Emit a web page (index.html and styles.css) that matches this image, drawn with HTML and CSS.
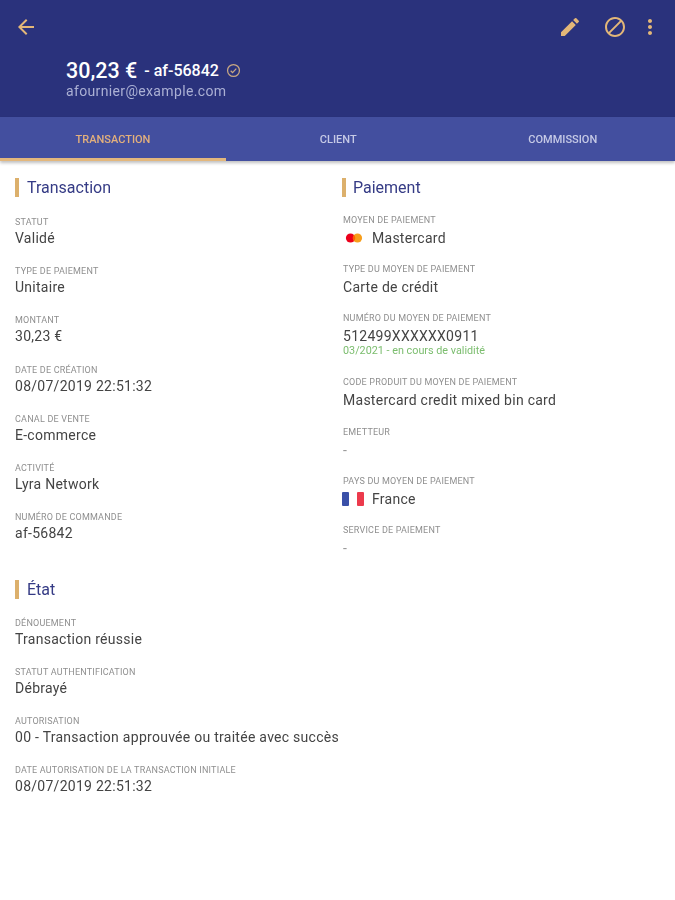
FILE: index.html
```html
<!DOCTYPE html>
<html lang="fr">
<head>
    <meta charset="UTF-8">
    <meta name="viewport" content="width=device-width, initial-scale=1.0">
    <title>Transaction</title>
    <link rel="stylesheet" href="styles.css">
</head>
<body>
    <header class="top-bar">
        <div class="actions">
            <svg class="icon back" viewBox="0 0 24 24"><path d="M20 11H7.83l5.59-5.59L12 4l-8 8 8 8 1.41-1.41L7.83 13H20v-2z"/></svg>
            <div class="actions-right">
                <svg class="icon" viewBox="0 0 24 24"><path d="M3 17.25V21h3.75L17.81 9.94l-3.75-3.75L3 17.25zM20.71 7.04a1 1 0 0 0 0-1.41l-2.34-2.34a1 1 0 0 0-1.41 0l-1.83 1.83 3.75 3.75 1.83-1.83z"/></svg>
                <svg class="icon" viewBox="0 0 24 24"><path d="M12 2C6.48 2 2 6.48 2 12s4.48 10 10 10 10-4.48 10-10S17.52 2 12 2zM4 12c0-4.42 3.58-8 8-8 1.85 0 3.55.63 4.9 1.69L5.69 16.9A7.9 7.9 0 0 1 4 12zm8 8c-1.85 0-3.55-.63-4.9-1.69L18.31 7.1A7.9 7.9 0 0 1 20 12c0 4.42-3.58 8-8 8z"/></svg>
                <svg class="icon dots" viewBox="0 0 24 24"><path d="M12 8c1.1 0 2-.9 2-2s-.9-2-2-2-2 .9-2 2 .9 2 2 2zm0 2c-1.1 0-2 .9-2 2s.9 2 2 2 2-.9 2-2-.9-2-2-2zm0 6c-1.1 0-2 .9-2 2s.9 2 2 2 2-.9 2-2-.9-2-2-2z"/></svg>
            </div>
        </div>
        <div class="summary">
            <div class="summary-line">
                <span class="amount">30,23 €</span>
                <span class="order">- af-56842</span>
                <svg class="check" viewBox="0 0 24 24"><circle cx="12" cy="12" r="9.5"/><path d="M7.5 12.5l3 3 6-6.5"/></svg>
            </div>
            <div class="email">afournier@example.com</div>
        </div>
    </header>

    <nav class="tabs">
        <div class="tab active">TRANSACTION</div>
        <div class="tab">CLIENT</div>
        <div class="tab">COMMISSION</div>
    </nav>

    <main class="content">
        <div class="left-col">
            <section class="section">
                <h2 class="section-title">Transaction</h2>
                <div class="field"><div class="label">Statut</div><div class="value">Validé</div></div>
                <div class="field"><div class="label">Type de paiement</div><div class="value">Unitaire</div></div>
                <div class="field"><div class="label">Montant</div><div class="value">30,23 €</div></div>
                <div class="field"><div class="label">Date de création</div><div class="value">08/07/2019 22:51:32</div></div>
                <div class="field"><div class="label">Canal de vente</div><div class="value">E-commerce</div></div>
                <div class="field"><div class="label">Activité</div><div class="value">Lyra Network</div></div>
                <div class="field"><div class="label">Numéro de commande</div><div class="value">af-56842</div></div>
            </section>
            <section class="section state">
                <h2 class="section-title">État</h2>
                <div class="field"><div class="label">Dénouement</div><div class="value">Transaction réussie</div></div>
                <div class="field"><div class="label">Statut authentification</div><div class="value">Débrayé</div></div>
                <div class="field"><div class="label">Autorisation</div><div class="value">00 - Transaction approuvée ou traitée avec succès</div></div>
                <div class="field"><div class="label">Date autorisation de la transaction initiale</div><div class="value">08/07/2019 22:51:32</div></div>
            </section>
        </div>
        <div class="right-col">
            <section class="section payment">
                <h2 class="section-title">Paiement</h2>
                <div class="field"><div class="label">Moyen de paiement</div>
                    <div class="value with-icon">
                        <svg class="brand" viewBox="0 0 22 14"><circle cx="7.5" cy="7" r="4.6" fill="#eb001b"/><circle cx="14.5" cy="7" r="4.6" fill="#f79e1b"/><path d="M11 4a4.6 4.6 0 0 1 0 6 4.6 4.6 0 0 1 0-6z" fill="#ff5f00"/></svg>
                        Mastercard
                    </div>
                </div>
                <div class="field"><div class="label">Type du moyen de paiement</div><div class="value">Carte de crédit</div></div>
                <div class="field"><div class="label">Numéro du moyen de paiement</div><div class="value">512499XXXXXX0911</div><div class="validity">03/2021 - en cours de validité</div></div>
                <div class="field"><div class="label">Code produit du moyen de paiement</div><div class="value">Mastercard credit mixed bin card</div></div>
                <div class="field"><div class="label">Emetteur</div><div class="value dash">-</div></div>
                <div class="field"><div class="label">Pays du moyen de paiement</div>
                    <div class="value with-icon">
                        <svg class="brand flag" viewBox="0 0 22 14"><rect width="7" height="14" rx="1" fill="#3a50a8"/><rect x="15" width="7" height="14" rx="1" fill="#ec3a4c"/></svg>
                        France
                    </div>
                </div>
                <div class="field"><div class="label">Service de paiement</div><div class="value dash">-</div></div>
            </section>
        </div>
    </main>
</body>
</html>
```

FILE: styles.css
```css
body {
    margin: 0;
    background: #fff;
    font-family: Roboto, "Liberation Sans", sans-serif;
    color: #444;
    filter: blur(0.6px);
}
.top-bar {
    height: 117px;
    box-sizing: border-box;
    padding: 14.5px 13px 0 14px;
    background: #2a327c;
}
.actions {
    display: flex;
    justify-content: space-between;
    align-items: center;
}
.actions-right {
    display: flex;
    gap: 21px;
}
.icon {
    width: 24px;
    height: 24px;
    fill: #e3b778;
}
.dots {
    margin-left: -10px;
}
.summary {
    padding: 19.5px 0 0 52px;
}
.summary-line {
    display: flex;
    align-items: center;
    color: #fff;
    height: 24px;
}
.amount {
    font-size: 21.5px;
    font-weight: 500;
}
.order {
    font-size: 16px;
    font-weight: 500;
    margin-left: 7px;
}
.check {
    width: 15px;
    height: 15px;
    margin-left: 7px;
    fill: none;
    stroke: #c9a883;
    stroke-width: 2;
}
.email {
    font-size: 14px;
    line-height: 18px;
    color: #abb0d4;
    letter-spacing: 0.35px;
}
.tabs {
    display: grid;
    grid-template-columns: 226px 1fr 1fr;
    height: 44px;
    background: #434f9f;
    box-shadow: 0 2px 3px rgba(0, 0, 0, 0.25);
}
.tab {
    display: flex;
    align-items: center;
    justify-content: center;
    box-sizing: border-box;
    font-size: 11px;
    font-weight: 500;
    color: #c6cae6;
}
.tab.active {
    color: #e3b07c;
    border-bottom: 3px solid #e3b77c;
    padding-top: 3px;
}
.content {
    display: grid;
    grid-template-columns: 328px 1fr;
    padding: 17px 0 0 15px;
}
.section-title {
    margin: 0 0 19px;
    padding-left: 8px;
    height: 19px;
    line-height: 19px;
    border-left: 4px solid #dcb06c;
    font-size: 16px;
    font-weight: 400;
    color: #353b85;
}
.payment .section-title {
    margin: 0 0 17px -1px;
    padding-left: 7px;
}
.state {
    margin-top: 20px;
}
.state .section-title {
    margin-bottom: 18px;
}
.field {
    height: 49.2px;
}
.state .field {
    height: 49px;
}
.label {
    font-size: 9px;
    line-height: 12px;
    text-transform: uppercase;
    color: #8f8f8f;
    letter-spacing: 0.2px;
}
.value {
    font-size: 14px;
    line-height: 18px;
    margin-top: 1px;
    letter-spacing: 0.27px;
}
.payment .value {
    margin-top: 3px;
}
.validity {
    font-size: 10.8px;
    line-height: 12px;
    color: #7bbd6e;
}
.field:has(.validity) {
    height: 64px;
}
.with-icon {
    display: flex;
    align-items: center;
    gap: 7px;
}
.brand {
    width: 22px;
    height: 14px;
}
.flag {
    margin-left: -1px;
    margin-right: 1px;
}
.dash {
    color: #999;
}
```
